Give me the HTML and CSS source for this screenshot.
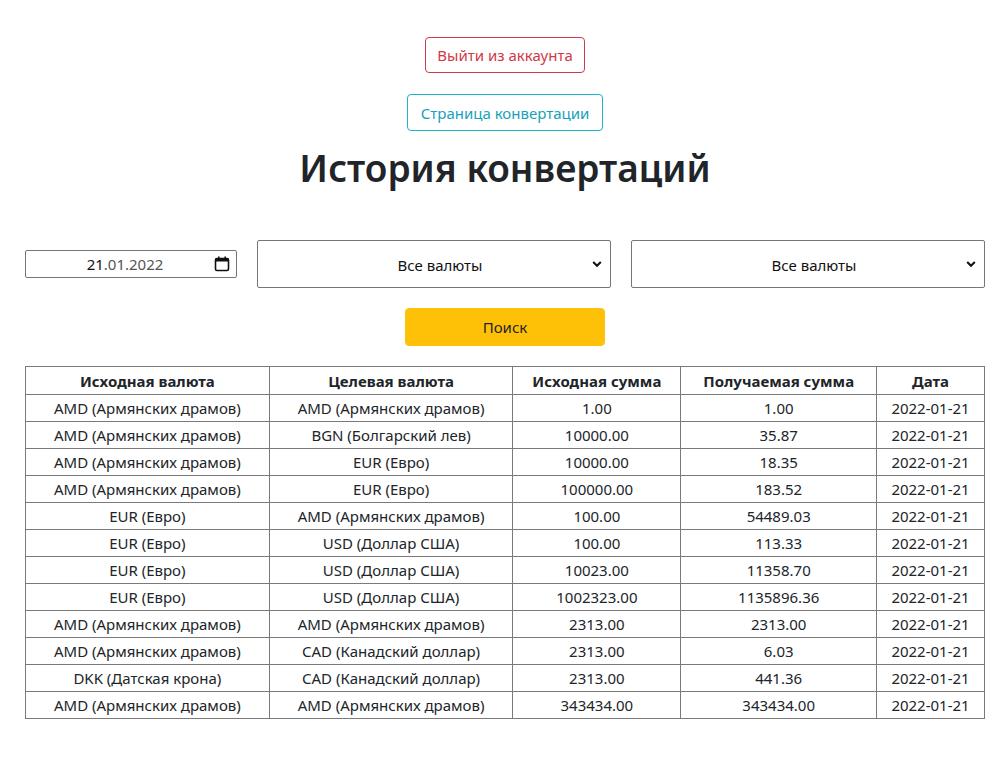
FILE: index.html
```html
<!DOCTYPE html>
<html lang="ru">
<head>
<meta charset="utf-8">
<title>История конвертаций</title>
<link rel="stylesheet" href="styles.css">
</head>
<body>
<div class="page">
  <div class="actions">
    <button class="btn btn-danger">Выйти из аккаунта</button>
    <button class="btn btn-info">Страница конвертации</button>
  </div>
  <h1 class="title">История конвертаций</h1>
  <div class="filters">
    <div class="date-input">
      <span class="date-text"><span class="day">21</span>.01.2022</span>
      <svg class="cal" width="16" height="16" viewBox="0 0 16 16"><rect x="1.5" y="2.5" width="13" height="12" rx="1.5" fill="none" stroke="#111" stroke-width="1.6"/><rect x="1.5" y="2.5" width="13" height="3" fill="#111"/><rect x="4" y="0.5" width="1.6" height="3" fill="#111"/><rect x="10.4" y="0.5" width="1.6" height="3" fill="#111"/></svg>
    </div>
    <div class="select">
      <span>Все валюты</span>
      <svg class="chev" width="10" height="8" viewBox="0 0 10 8"><path d="M1.2 2 L5 5.8 L8.8 2" fill="none" stroke="#111" stroke-width="2"/></svg>
    </div>
    <div class="select">
      <span>Все валюты</span>
      <svg class="chev" width="10" height="8" viewBox="0 0 10 8"><path d="M1.2 2 L5 5.8 L8.8 2" fill="none" stroke="#111" stroke-width="2"/></svg>
    </div>
  </div>
  <div class="search-row">
    <button class="btn btn-warning">Поиск</button>
  </div>
  <table class="history">
    <thead>
      <tr><th class="c1">Исходная валюта</th><th class="c2">Целевая валюта</th><th class="c3">Исходная сумма</th><th class="c4">Получаемая сумма</th><th class="c5">Дата</th></tr>
    </thead>
    <tbody>
      <tr><td>AMD (Армянских драмов)</td><td>AMD (Армянских драмов)</td><td>1.00</td><td>1.00</td><td>2022-01-21</td></tr>
      <tr><td>AMD (Армянских драмов)</td><td>BGN (Болгарский лев)</td><td>10000.00</td><td>35.87</td><td>2022-01-21</td></tr>
      <tr><td>AMD (Армянских драмов)</td><td>EUR (Евро)</td><td>10000.00</td><td>18.35</td><td>2022-01-21</td></tr>
      <tr><td>AMD (Армянских драмов)</td><td>EUR (Евро)</td><td>100000.00</td><td>183.52</td><td>2022-01-21</td></tr>
      <tr><td>EUR (Евро)</td><td>AMD (Армянских драмов)</td><td>100.00</td><td>54489.03</td><td>2022-01-21</td></tr>
      <tr><td>EUR (Евро)</td><td>USD (Доллар США)</td><td>100.00</td><td>113.33</td><td>2022-01-21</td></tr>
      <tr><td>EUR (Евро)</td><td>USD (Доллар США)</td><td>10023.00</td><td>11358.70</td><td>2022-01-21</td></tr>
      <tr><td>EUR (Евро)</td><td>USD (Доллар США)</td><td>1002323.00</td><td>1135896.36</td><td>2022-01-21</td></tr>
      <tr><td>AMD (Армянских драмов)</td><td>AMD (Армянских драмов)</td><td>2313.00</td><td>2313.00</td><td>2022-01-21</td></tr>
      <tr><td>AMD (Армянских драмов)</td><td>CAD (Канадский доллар)</td><td>2313.00</td><td>6.03</td><td>2022-01-21</td></tr>
      <tr><td>DKK (Датская крона)</td><td>CAD (Канадский доллар)</td><td>2313.00</td><td>441.36</td><td>2022-01-21</td></tr>
      <tr><td>AMD (Армянских драмов)</td><td>AMD (Армянских драмов)</td><td>343434.00</td><td>343434.00</td><td>2022-01-21</td></tr>
    </tbody>
  </table>
</div>
</body>
</html>
```
FILE: styles.css
```css
* { box-sizing: border-box; }
html, body { margin: 0; padding: 0; background: #fff; }
body {
  font-family: "Noto Sans", "Open Sans", sans-serif;
  font-size: 15px;
  color: #212529;
}
.page {
  padding: 37px 15px 40px 25px;
}
.actions {
  display: flex;
  flex-direction: column;
  align-items: center;
  gap: 21px;
}
.btn {
  font-family: inherit;
  font-size: 15px;
  line-height: 22px;
  padding: 6px 4px;
  border-radius: 4px;
  background: #fff;
  cursor: pointer;
  height: 36px;
  white-space: nowrap;
}
.btn-danger { border: 1px solid #d03a48; color: #d03a48; width: 160px; }
.btn-info { border: 1px solid #17b6cc; color: #17a2b8; width: 196px; height: 37px; }
.btn-warning {
  background: #ffc107;
  border: 1px solid #ffc107;
  color: #212529;
  width: 200px;
  height: 38px;
}
.title {
  margin: 11px 0 0;
  text-align: center;
  font-size: 37px;
  font-weight: 600;
  line-height: 52px;
  color: #212529;
}
.filters {
  margin-top: 46px;
  display: flex;
  align-items: center;
  gap: 20px;
}
.date-input {
  width: 212px;
  height: 28px;
  border: 1px solid #767676;
  border-radius: 2px;
  display: flex;
  align-items: center;
  padding: 0 6px 0 10px;
}
.date-text { flex: 1; text-align: center; color: #555; }
.day { color: #111; }
.cal { flex: none; }
.select {
  flex: 1;
  height: 48px;
  border: 1px solid #767676;
  border-radius: 2px;
  display: flex;
  align-items: center;
  padding: 2px 8px 0 30px;
  color: #111;
}
.select span { flex: 1; text-align: center; }
.chev { flex: none; margin-bottom: 2px; }
.search-row {
  margin-top: 20px;
  display: flex;
  justify-content: center;
}
.history {
  margin-top: 20px;
  width: 960px;
  border-collapse: collapse;
  text-align: center;
}
.history th, .history td {
  border: 1px solid #7a7a7a;
  height: 27px;
  padding: 0 4px;
  font-weight: 400;
  color: #212529;
}
.history th { font-weight: 700; height: 28px; }
.c1 { width: 244px; }
.c2 { width: 244px; }
.c3 { width: 168px; }
.c4 { width: 196px; }
.c5 { width: 108px; }
```
